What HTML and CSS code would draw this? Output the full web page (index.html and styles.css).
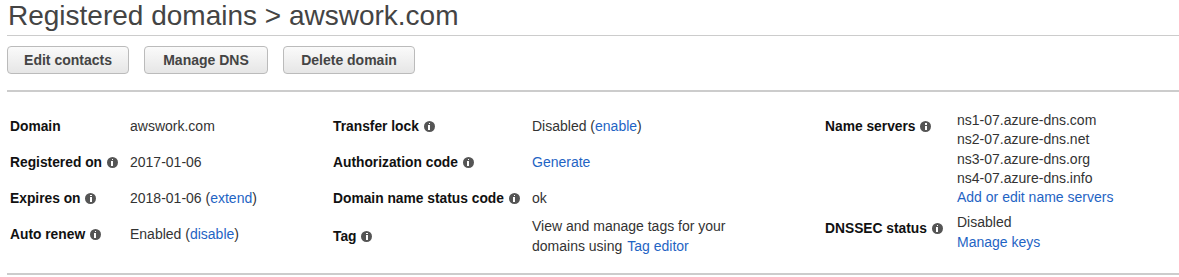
FILE: index.html
```html
<!DOCTYPE html>
<html>
<head>
	<meta charset="utf-8">
	<title>Registered domains</title>
	<link rel="stylesheet" href="styles.css">
</head>
<body>
	<div id="page">
		<h1 class="title">Registered domains &gt; awswork.com</h1>
		<div class="actions">
			<button class="btn btn-contacts">Edit contacts</button>
			<button class="btn btn-dns">Manage DNS</button>
			<button class="btn btn-delete">Delete domain</button>
		</div>
		<div class="details">
			<div class="col col1">
				<div class="row">
					<div class="label">Domain</div>
					<div class="value">awswork.com</div>
				</div>
				<div class="row">
					<div class="label">Registered on <i class="info"></i></div>
					<div class="value">2017-01-06</div>
				</div>
				<div class="row">
					<div class="label">Expires on <i class="info"></i></div>
					<div class="value">2018-01-06 (<a href="#">extend</a>)</div>
				</div>
				<div class="row">
					<div class="label">Auto renew <i class="info"></i></div>
					<div class="value">Enabled (<a href="#">disable</a>)</div>
				</div>
			</div>
			<div class="col col2">
				<div class="row">
					<div class="label">Transfer lock <i class="info"></i></div>
					<div class="value">Disabled (<a href="#">enable</a>)</div>
				</div>
				<div class="row">
					<div class="label">Authorization code <i class="info"></i></div>
					<div class="value"><a href="#">Generate</a></div>
				</div>
				<div class="row">
					<div class="label">Domain name status code <i class="info"></i></div>
					<div class="value">ok</div>
				</div>
				<div class="row">
					<div class="label">Tag <i class="info"></i></div>
					<div class="value tags">View and manage tags for your<br>domains using<a class="tag-link" href="#">Tag editor</a></div>
				</div>
			</div>
			<div class="col col3">
				<div class="row ns">
					<div class="label">Name servers <i class="info"></i></div>
					<div class="value list">
						<span>ns1-07.azure-dns.com</span>
						<span>ns2-07.azure-dns.net</span>
						<span>ns3-07.azure-dns.org</span>
						<span>ns4-07.azure-dns.info</span>
						<a href="#">Add or edit name servers</a>
					</div>
				</div>
				<div class="row dnssec">
					<div class="label">DNSSEC status <i class="info"></i></div>
					<div class="value list">
						<span>Disabled</span>
						<a href="#">Manage keys</a>
					</div>
				</div>
			</div>
		</div>
	</div>
</body>
</html>
```

FILE: styles.css
```css
* {
	margin: 0;
	padding: 0;
	box-sizing: border-box;
}
body {
	font-family: "Liberation Sans", Arial, sans-serif;
	font-size: 14px;
	color: #333;
	background: #fff;
}
#page {
	padding-left: 7px;
	overflow: hidden;
}
.title {
	font-size: 28px;
	font-weight: normal;
	color: #444;
	line-height: 32px;
	padding: 0 0 3px 1px;
	border-bottom: 1px solid #ccc;
}
.actions {
	display: flex;
	gap: 15px;
	padding: 10px 0 16px;
	border-bottom: 2px solid #ccc;
}
.btn {
	height: 28px;
	font-family: inherit;
	font-size: 14px;
	font-weight: bold;
	color: #444;
	background: linear-gradient(#fafafa, #e6e6e6);
	border: 1px solid #bbb;
	border-radius: 4px;
}
.btn-contacts {
	width: 122px;
}
.btn-dns {
	width: 124px;
}
.btn-delete {
	width: 132px;
}
.details {
	display: grid;
	grid-template-columns: 323px 492px 1fr;
	padding: 16px 0 17px 3px;
	border-bottom: 2px solid #ccc;
}
.row {
	display: flex;
	align-items: center;
	min-height: 36px;
}
.label {
	font-weight: bold;
	font-size: 13.8px;
	color: #111;
	white-space: nowrap;
}
.col1 .label {
	width: 120px;
}
.col2 .label {
	width: 199px;
}
.col3 .label {
	width: 132px;
}
.value {
	color: #333;
}
a {
	color: #1f64c4;
	text-decoration: none;
}
.tags {
	width: 205px;
	line-height: 20px;
}
.tag-link {
	margin-left: 5px;
}
.info {
	display: inline-block;
	width: 11px;
	height: 11px;
	border-radius: 50%;
	background: #555;
	vertical-align: -1px;
	margin-left: 1px;
	position: relative;
}
.info::before {
	content: "";
	position: absolute;
	left: 5px;
	top: 2px;
	width: 1.5px;
	height: 1.5px;
	background: #fff;
}
.info::after {
	content: "";
	position: absolute;
	left: 4.5px;
	top: 4.5px;
	width: 2px;
	height: 4.5px;
	background: #fff;
}
.list {
	display: flex;
	flex-direction: column;
	line-height: 19.3px;
}
.ns {
	align-items: flex-start;
	padding-top: 3px;
}
.ns .label {
	padding-top: 8px;
}
.dnssec {
	margin-top: 6px;
	line-height: 20px;
}
.dnssec .label {
	padding-bottom: 8px;
}
```
